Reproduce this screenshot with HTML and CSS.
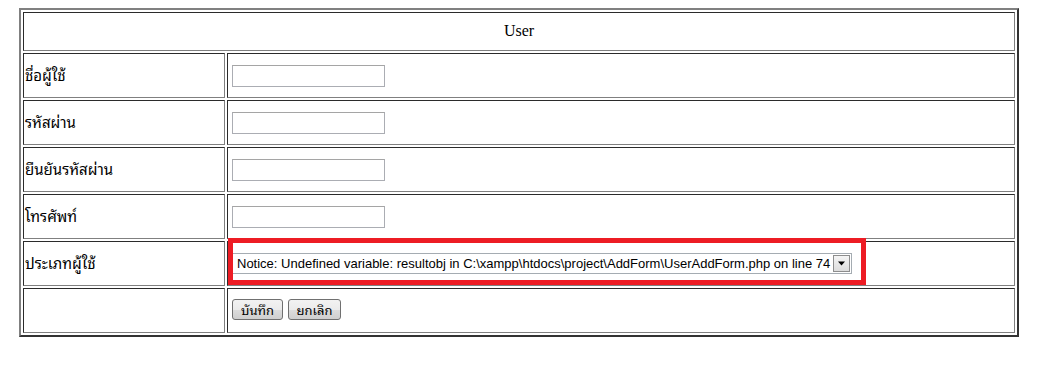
FILE: index.html
```html
<!DOCTYPE html>
<html lang="th">
<head>
<meta charset="utf-8">
<title>User</title>
<link rel="stylesheet" href="styles.css">
</head>
<body>
<form class="user-form">
  <table class="form-table">
    <tr class="head-row">
      <td colspan="2" class="head-cell">User</td>
    </tr>
    <tr>
      <td class="label">ชื่อผู้ใช้</td>
      <td class="field"><input type="text" class="text-input"></td>
    </tr>
    <tr>
      <td class="label">รหัสผ่าน</td>
      <td class="field"><input type="password" class="text-input"></td>
    </tr>
    <tr>
      <td class="label">ยืนยันรหัสผ่าน</td>
      <td class="field"><input type="password" class="text-input"></td>
    </tr>
    <tr>
      <td class="label">โทรศัพท์</td>
      <td class="field"><input type="text" class="text-input"></td>
    </tr>
    <tr>
      <td class="label">ประเภทผู้ใช้</td>
      <td class="field field-select">
        <div class="select-box">
          <span class="select-value">Notice: Undefined variable: resultobj in C:\xampp\htdocs\project\AddForm\UserAddForm.php on line 74</span>
          <span class="select-arrow"><svg width="9" height="5" viewBox="0 0 9 5"><path d="M1 0.5h7L4.5 4.5z" fill="#000"/></svg></span>
        </div>
        <div class="highlight"></div>
      </td>
    </tr>
    <tr>
      <td class="label"></td>
      <td class="field">
        <div class="actions">
          <button type="button" class="btn">บันทึก</button>
          <button type="button" class="btn btn-wide">ยกเลิก</button>
        </div>
      </td>
    </tr>
  </table>
</form>
</body>
</html>
```

FILE: styles.css
```css
html, body {
  background: #ffffff;
}
body {
  margin: 8px;
  font-family: "Liberation Serif", "Times New Roman", serif;
  font-size: 16px;
  color: #000;
}
.user-form {
  margin: 0 0 0 11px;
}
.form-table {
  width: 1000px;
  border-collapse: separate;
  border-spacing: 2px;
  border-style: solid;
  border-width: 2px;
  border-color: #808080 #333333 #333333 #808080;
}
.form-table td {
  border-style: solid;
  border-width: 1px;
  border-color: #2b2b2b #808080 #808080 #2b2b2b;
  padding: 0 1px;
  vertical-align: middle;
}
.form-table tr {
  height: 45px;
}
.form-table tr.head-row {
  height: 39px;
}
.form-table td.head-cell {
  text-align: center;
  font-family: "Liberation Serif", "Times New Roman", serif;
  font-size: 16px;
  padding-bottom: 2px;
}
.form-table td.label {
  width: 198px;
  font-family: "Tahoma", "Noto Sans Thai Looped", "Loma", "Garuda", "Noto Serif Thai", "Noto Sans Thai", "DejaVu Sans", "Noto Sans", sans-serif;
  font-size: 15px;
  white-space: nowrap;
  padding-bottom: 3px;
}
.field {
  font-family: "Liberation Sans", Arial, sans-serif;
  font-size: 13px;
}
.text-input {
  display: block;
  box-sizing: border-box;
  width: 153px;
  height: 22px;
  margin: 0 0 0 3px;
  padding: 1px 2px;
  border: 1px solid #abadb3;
  border-top-color: #a5a5a5;
  background: #fff;
  font-family: "Liberation Sans", Arial, sans-serif;
  font-size: 13px;
}
.field-select {
  position: relative;
}
.select-box {
  display: flex;
  align-items: center;
  box-sizing: border-box;
  width: 620px;
  height: 21px;
  margin-left: 3px;
  padding: 0 1px 0 4px;
  border: 1px solid #a5acb2;
  background: #fff;
  font-family: "Liberation Sans", Arial, sans-serif;
  font-size: 13px;
  color: #000;
  white-space: nowrap;
}
.select-value {
  flex: 1;
  overflow: hidden;
}
.select-arrow {
  display: flex;
  align-items: center;
  justify-content: center;
  box-sizing: border-box;
  width: 17px;
  height: 17px;
  border: 1px solid #8d8d8d;
  background: linear-gradient(#f4f4f4, #dcdcdc);
}
.highlight {
  position: absolute;
  left: 0;
  top: -4px;
  width: 638px;
  height: 47px;
  box-sizing: border-box;
  border: 5px solid #ed1c24;
  pointer-events: none;
}
.actions {
  display: flex;
  gap: 5px;
  margin-left: 3px;
  margin-top: -2px;
}
.btn {
  box-sizing: border-box;
  height: 21px;
  width: 51px;
  padding: 0;
  border: 1px solid #707070;
  border-radius: 3px;
  background: linear-gradient(#f2f2f2 0%, #ebebeb 50%, #dddddd 51%, #cfcfcf 100%);
  font-family: "Tahoma", "Noto Sans Thai Looped", "Loma", "Garuda", "Noto Serif Thai", "Noto Sans Thai", "DejaVu Sans", "Noto Sans", sans-serif;
  font-size: 13px;
  color: #000;
  line-height: 17px;
}
.btn-wide {
  width: 53px;
}
```
